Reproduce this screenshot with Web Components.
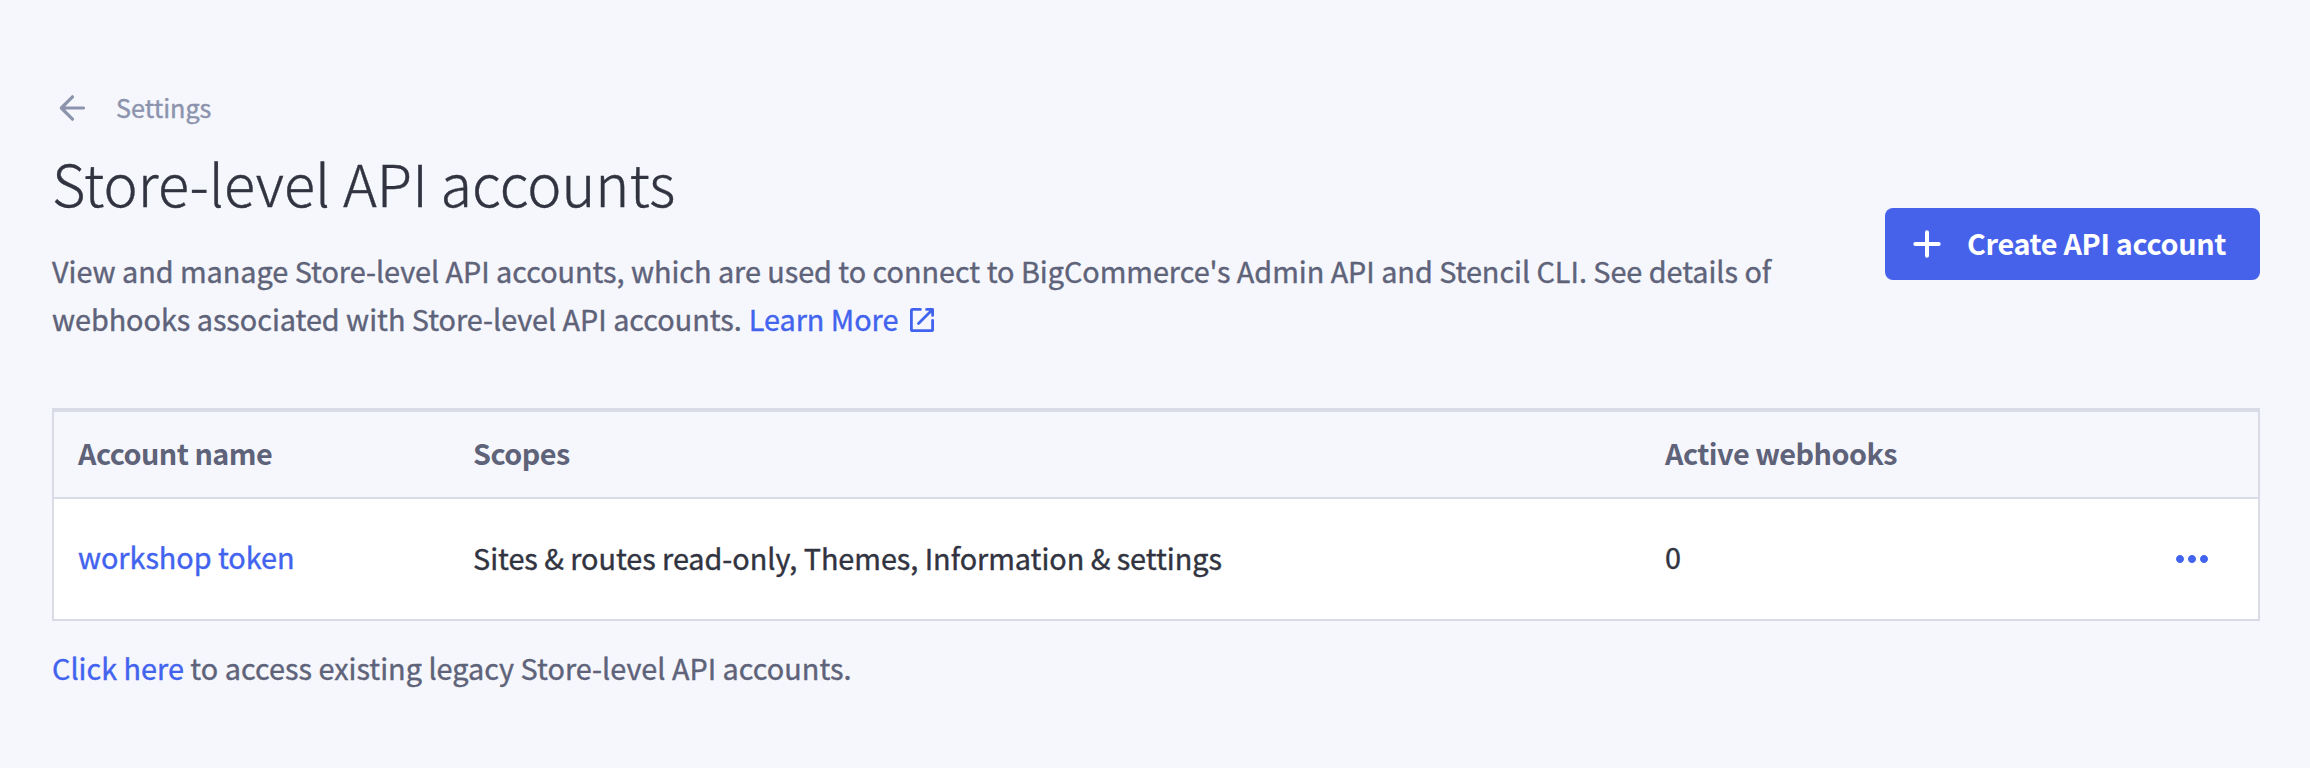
<!DOCTYPE html>
<html lang="en"><head><meta charset="utf-8"><title>Store-level API accounts</title>
<style>
html,body{margin:0;background:#f6f7fc}
body{font-family:"Noto Sans CJK SC","Noto Sans CJK JP","Source Sans Pro",sans-serif;-webkit-text-stroke:.4px}
</style></head><body>
<api-page></api-page>
<script>
const define=(name,html)=>customElements.define(name,class extends HTMLElement{
 constructor(){super();this.attachShadow({mode:"open"}).innerHTML=html;}
});
define("back-link",`<style>:host{display:flex;align-items:center;height:40px;color:#8c93ad;font-size:25.2px}svg{width:40px;height:40px;margin-right:24px}span{padding-bottom:2px}</style>
<svg viewBox="0 0 40 40" fill="none" stroke="currentColor" stroke-width="3.2" stroke-linecap="round" stroke-linejoin="round"><path d="M31.5 20H10M20.5 8.8 9.3 20l11.2 11.2"/></svg><span><slot></slot></span>`);
define("text-link",`<style>:host{display:inline;color:#4263ee}</style><slot></slot>`);
define("create-button",`<style>:host{display:flex;align-items:center;box-sizing:border-box;width:375px;height:72px;padding-left:24px;background:#4662ea;border-radius:8px;color:#fff;font-size:28.8px;font-weight:700;letter-spacing:-.33px;margin-top:56px;-webkit-text-stroke:0}svg{width:36px;height:36px;margin-right:22px}span{padding-bottom:2px}</style>
<svg viewBox="0 0 36 36" fill="none" stroke="#fff" stroke-width="4" stroke-linecap="round"><path d="M18 6.3v23.4M6.3 18h23.4"/></svg><span><slot></slot></span>`);
define("account-row",`<style>:host{display:grid;grid-template-columns:395px 1192px 1fr auto;align-items:center;box-sizing:border-box;padding:0 42px 0 24px}</style><slot></slot>`);
define("more-button",`<style>:host{display:block;width:48px;height:48px;color:#4263ee}svg{display:block}</style><svg width="48" height="48" viewBox="0 0 24 24" fill="currentColor"><path d="M6 10c-1.1 0-2 .9-2 2s.9 2 2 2 2-.9 2-2-.9-2-2-2zm12 0c-1.1 0-2 .9-2 2s.9 2 2 2 2-.9 2-2-.9-2-2-2zm-6 0c-1.1 0-2 .9-2 2s.9 2 2 2 2-.9 2-2-.9-2-2-2z"/></svg>`);
define("api-page",`<style>
:host{display:block;box-sizing:border-box;height:768px;padding:88px 50px 0 52px;color:#5e637a;font-size:28.8px;line-height:48px}
h1{margin:10px 0 0;font-size:57.6px;line-height:88px;font-weight:300;color:#313440;letter-spacing:.02px}
header{display:flex;justify-content:space-between;align-items:center;height:256px}
p{margin:21px 0 0;white-space:nowrap}
header p{padding-bottom:1px;letter-spacing:-.025px}
header p text-link{margin-left:.7px}
.t{margin-top:64px;border:2px solid #d9dbe7;border-top-width:4px}
.h{height:87px;border-bottom:2px solid #d9dbe7;font-weight:700;letter-spacing:-.52px;-webkit-text-stroke:0}
.h span,.r .v{padding-bottom:4px}
.r{height:120px;background:#fff;color:#313440}
.r span,.r text-link{letter-spacing:-.03px;padding-bottom:2px}
.f{margin-top:23px;letter-spacing:.015px}
svg{vertical-align:-5px;margin-left:1px}
</style>
<header><div><back-link>Settings</back-link><h1>Store-level API accounts</h1>
<p>View and manage Store-level API accounts, which are used to connect to BigCommerce's Admin API and Stencil CLI. See details of<br>webhooks associated with Store-level API accounts. <text-link>Learn More <svg width="32" height="32" viewBox="0 0 32 32" fill="none" stroke="currentColor" stroke-width="2.8" stroke-linecap="round" stroke-linejoin="round"><path d="M14.4 5.4H6.6a1.2 1.2 0 0 0-1.2 1.2v18.8a1.2 1.2 0 0 0 1.2 1.2h18.8a1.2 1.2 0 0 0 1.2-1.2v-9M20.6 5.4h6v6M12.5 19.5 26 6"/></svg></text-link></p></div><create-button>Create API account</create-button></header>
<div class="t"><account-row class="h"><span>Account name</span><span>Scopes</span><span>Active webhooks</span></account-row>
<account-row class="r"><text-link class="v">workshop token</text-link><span>Sites &amp; routes read-only, Themes, Information &amp; settings</span><span class="v">0</span><more-button></more-button></account-row></div>
<p class="f"><text-link>Click here</text-link> to access existing legacy Store-level API accounts.</p>`);
</script></body></html>
